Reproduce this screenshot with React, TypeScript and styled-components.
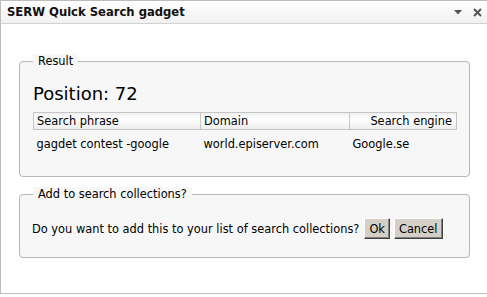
import styled, { createGlobalStyle } from "styled-components";

const GlobalStyle = createGlobalStyle`
  html, body {
    margin: 0;
    padding: 0;
    background: #ffffff;
  }
  body {
    font-family: "DejaVu Sans", Verdana, sans-serif;
    font-size: 11.4px;
    color: #000;
  }
`;

const Gadget = styled.div`
  width: 500px;
  height: 292px;
  border: 1px solid #bcbcbc;
  border-right: none;
  background: #fff;
`;

const TitleBar = styled.div`
  height: 22px;
  display: flex;
  align-items: center;
  justify-content: space-between;
  padding: 0 6px 0 6px;
  width: 475px;
  background: linear-gradient(#ffffff, #f1f1f1);
  border-bottom: 1px solid #d2d2d2;
`;

const Title = styled.div`
  font-weight: bold;
  font-size: 11.6px;
  color: #111;
`;

const TitleTools = styled.div`
  display: flex;
  align-items: center;
  gap: 11px;
`;

const Body = styled.div`
  padding: 30px 0 0 18px;
  width: 451px;
  display: flex;
  flex-direction: column;
  gap: 10px;
`;

const Box = styled.fieldset<{ $bottom?: number }>`
  margin: 0;
  border: 1px solid #b8b8b8;
  border-radius: 4px;
  background: #f7f7f7;
  padding: 0 12px ${(p) => p.$bottom ?? 12}px 13px;
  min-width: 0;
`;

const Legend = styled.legend`
  margin-left: 0;
  padding: 0 5px;
  background: #f7f7f7;
  font-size: 11.4px;
  line-height: 14px;
`;

const Position = styled.div`
  font-size: 18px;
  line-height: 22px;
  margin: 15px 0 7px 0;
`;

const Table = styled.table`
  width: 423px;
  border-collapse: collapse;
  table-layout: fixed;
`;

const Col = styled.col<{ $w: number }>`
  width: ${(p) => p.$w}px;
`;

const HeadCell = styled.th<{ $right?: boolean }>`
  border: 1px solid #c6c6c6;
  background: linear-gradient(#f2f2f2, #ffffff 35%, #ececec);
  font-weight: normal;
  text-align: ${(p) => (p.$right ? "right" : "left")};
  padding: 1px 4px 1px 3px;
  height: 14px;
  line-height: 14px;
  white-space: nowrap;
  overflow: hidden;
`;

const Cell = styled.td`
  padding: 7px 3px 2px 3px;
  line-height: 14px;
  white-space: nowrap;
`;

const Question = styled.div`
  display: flex;
  align-items: center;
  gap: 4px;
  margin: 17px 0 0 0;
`;

const QuestionText = styled.span`
  margin-left: -1px;
  margin-right: 1px;
`;

const Button = styled.button`
  font-family: "DejaVu Sans", Verdana, sans-serif;
  font-size: 11.4px;
  height: 21px;
  padding: 0 4px;
  background: #d4d0c8;
  color: #000;
  border: 1px solid;
  border-color: #ffffff #404040 #404040 #ffffff;
  box-shadow: inset -1px -1px 0 #808080;
`;

const App = () => {
  return (
    <>
      <GlobalStyle />
      <Gadget>
        <TitleBar>
          <Title>SERW Quick Search gadget</Title>
          <TitleTools>
            <svg width="8" height="5" viewBox="0 0 8 5">
              <path d="M0 0 H8 L4 4.5 Z" fill="#555" />
            </svg>
            <svg width="9" height="9" viewBox="0 0 9 9">
              <path d="M1 1 L8 8 M8 1 L1 8" stroke="#555" strokeWidth="2" />
            </svg>
          </TitleTools>
        </TitleBar>
        <Body>
          <Box $bottom={23}>
            <Legend>Result</Legend>
            <Position>Position: 72</Position>
            <Table>
              <colgroup>
                <Col $w={167} />
                <Col $w={149} />
                <Col $w={107} />
              </colgroup>
              <thead>
                <tr>
                  <HeadCell>Search phrase</HeadCell>
                  <HeadCell>Domain</HeadCell>
                  <HeadCell $right>Search engine</HeadCell>
                </tr>
              </thead>
              <tbody>
                <tr>
                  <Cell>gagdet contest -google</Cell>
                  <Cell>world.episerver.com</Cell>
                  <Cell>Google.se</Cell>
                </tr>
              </tbody>
            </Table>
          </Box>
          <Box $bottom={18}>
            <Legend>Add to search collections?</Legend>
            <Question>
              <QuestionText>Do you want to add this to your list of search collections?</QuestionText>
              <Button>Ok</Button>
              <Button>Cancel</Button>
            </Question>
          </Box>
        </Body>
      </Gadget>
    </>
  );
};

export default App;
